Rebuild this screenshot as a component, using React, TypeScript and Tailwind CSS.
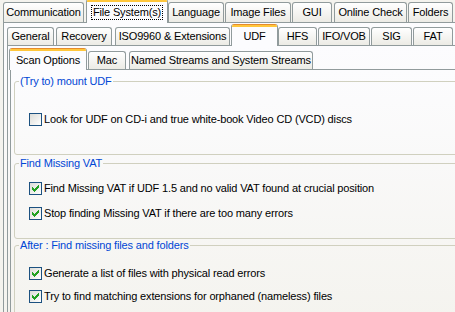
import React from "react";

const FONT = { fontFamily: '"Liberation Sans", Arial, sans-serif', letterSpacing: "-0.15px" };

type TabDef = { label: string; w: number; ml: number; active?: boolean; focus?: boolean };

function Tab({ t, h }: { t: TabDef; h: number }) {
  if (t.active) {
    return (
      <div
        className="relative z-10 -mb-px flex flex-col rounded-t-[3px] border-x border-[#919b9c] bg-[#fcfcfe] overflow-hidden whitespace-nowrap"
        style={{ width: t.w, marginLeft: t.ml, height: h + 4 }}
      >
        <div className="h-px bg-[#e68b2c] shrink-0" />
        <div className="h-[2px] bg-[#ffc73c] shrink-0" />
        <div className="flex flex-1 items-center justify-center pb-px">
          <span className={t.focus ? "border border-dotted border-black px-px leading-[13px]" : "leading-[13px]"}>
            {t.label}
          </span>
        </div>
      </div>
    );
  }
  return (
    <div
      className="flex items-center justify-center rounded-t-[3px] border border-b-0 border-[#919b9c] bg-gradient-to-b from-white to-[#ecebe5] leading-[13px] whitespace-nowrap"
      style={{ width: t.w, marginLeft: t.ml, height: h }}
    >
      {t.label}
    </div>
  );
}

function CheckBox({ checked }: { checked?: boolean }) {
  return (
    <div className="h-[13px] w-[13px] shrink-0 border border-[#1c5180] bg-gradient-to-br from-[#dcdcd7] to-white">
      {checked && (
        <svg width="11" height="11" viewBox="0 0 11 11" shapeRendering="crispEdges">
          <g fill="#21a121">
            <rect x="8" y="2" width="1" height="1" />
            <rect x="7" y="3" width="2" height="1" />
            <rect x="2" y="4" width="1" height="1" />
            <rect x="6" y="4" width="3" height="1" />
            <rect x="2" y="5" width="2" height="1" />
            <rect x="5" y="5" width="3" height="1" />
            <rect x="2" y="6" width="5" height="1" />
            <rect x="3" y="7" width="3" height="1" />
            <rect x="4" y="8" width="1" height="1" />
          </g>
        </svg>
      )}
    </div>
  );
}

function Row({ checked, label }: { checked?: boolean; label: string }) {
  return (
    <div className="ml-[10px] flex h-[13px] items-center gap-[2px]">
      <CheckBox checked={checked} />
      <span className="leading-[13px] whitespace-nowrap">{label}</span>
    </div>
  );
}

export default function App() {
  const l1: TabDef[] = [
    { label: "Communication", w: 81, ml: 3 },
    { label: "File System(s)", w: 82, ml: 2, active: true, focus: true },
    { label: "Language", w: 56, ml: 0 },
    { label: "Image Files", w: 66, ml: 1 },
    { label: "GUI", w: 40, ml: 1 },
    { label: "Online Check", w: 73, ml: 2 },
    { label: "Folders", w: 45, ml: 1 },
  ];
  const l2: TabDef[] = [
    { label: "General", w: 47, ml: 0 },
    { label: "Recovery", w: 56, ml: 2 },
    { label: "ISO9960 & Extensions", w: 115, ml: 3 },
    { label: "UDF", w: 47, ml: 1, active: true },
    { label: "HFS", w: 39, ml: 0 },
    { label: "IFO/VOB", w: 52, ml: 1 },
    { label: "SIG", w: 41, ml: 1 },
    { label: "FAT", w: 40, ml: 1 },
  ];
  const l3: TabDef[] = [
    { label: "Scan Options", w: 78, ml: -1, active: true },
    { label: "Mac", w: 38, ml: 1 },
    { label: "Named Streams and System Streams", w: 184, ml: 3 },
  ];

  return (
    <div
      className="relative h-[312px] w-[455px] overflow-hidden bg-[#f4f3ee] text-[11px] text-black"
      style={FONT}
    >
      <div className="flex items-end h-[22px]">
        {l1.map((t) => (
          <Tab key={t.label} t={t} h={20} />
        ))}
      </div>
      <div className="ml-[3px] w-[480px] h-[300px] border border-[#919b9c] bg-gradient-to-b from-[#fcfcfe] to-[#f4f3ee] pl-[3px] pt-px">
        <div className="flex items-end h-[21px]">
          {l2.map((t) => (
            <Tab key={t.label} t={t} h={18} />
          ))}
        </div>
        <div className="w-[470px] h-[280px] border border-[#919b9c] bg-gradient-to-b from-[#fcfcfe] to-[#f4f3ee] pl-[2px] pt-[2px]">
          <div className="flex items-end h-[21px]">
            {l3.map((t) => (
              <Tab key={t.label} t={t} h={18} />
            ))}
          </div>
          <div className="w-[460px] h-[260px] border border-[#919b9c] bg-gradient-to-b from-[#fcfcfe] to-[#f4f3ee] pl-[3px] pt-[5px]">
            <fieldset className="w-[450px] rounded-[3px] border border-[#d0d0bf] pl-[4px] pt-[25px] pb-[28px]">
              <legend className="px-px leading-[13px] text-[#0046d5]">(Try to) mount UDF</legend>
              <Row label="Look for UDF on CD-i and true white-book Video CD (VCD) discs" />
            </fieldset>
            <fieldset className="mt-[2px] w-[450px] rounded-[3px] border border-[#d0d0bf] pl-[4px] pt-[12px] pb-[18px]">
              <legend className="px-px leading-[13px] text-[#0046d5]">Find Missing VAT</legend>
              <div className="flex flex-col gap-[12px]">
                <Row checked label="Find Missing VAT if UDF 1.5 and no valid VAT found at crucial position" />
                <Row checked label="Stop finding Missing VAT if there are too many errors" />
              </div>
            </fieldset>
            <fieldset className="w-[450px] rounded-[3px] border border-[#d0d0bf] pl-[4px] pt-[15px] pb-[18px]">
              <legend className="px-px leading-[13px] text-[#0046d5]">After : Find missing files and folders</legend>
              <div className="flex flex-col gap-[10px]">
                <Row checked label="Generate a list of files with physical read errors" />
                <Row checked label="Try to find matching extensions for orphaned (nameless) files" />
              </div>
            </fieldset>
          </div>
        </div>
      </div>
    </div>
  );
}
